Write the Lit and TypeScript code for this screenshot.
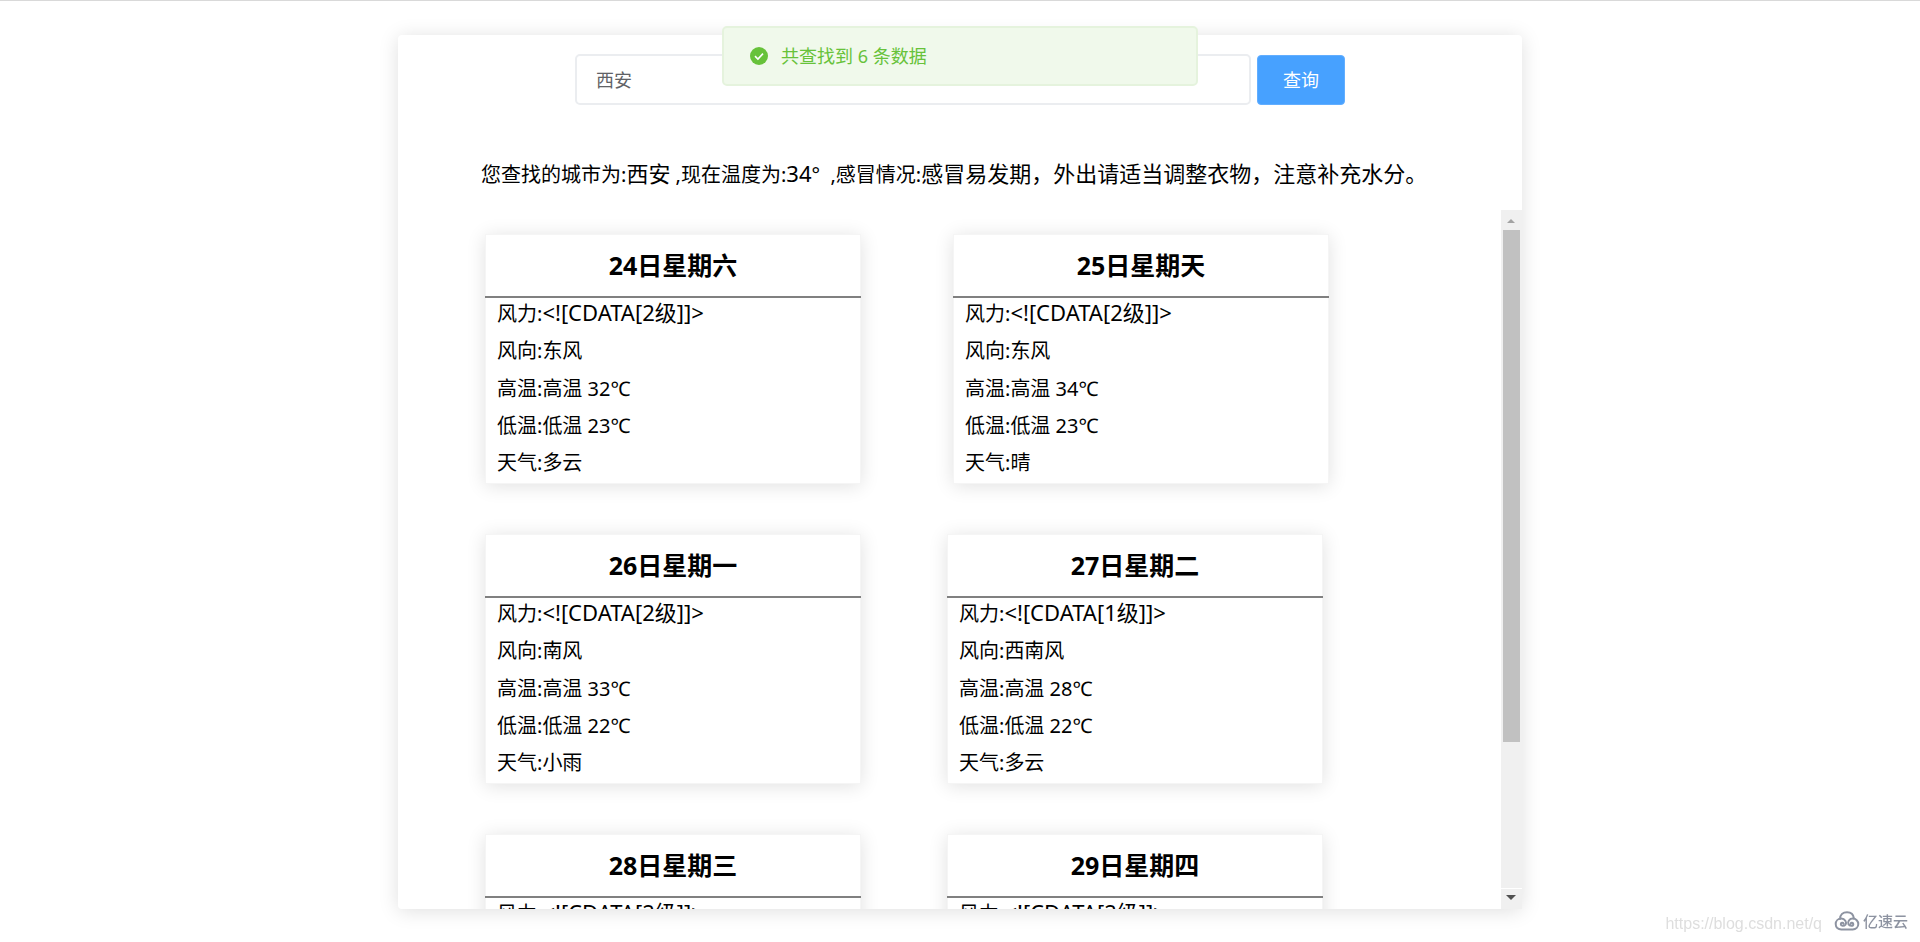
import { LitElement, html, css, svg } from "lit";
import { customElement, property, state } from "lit/decorators.js";
import { classMap } from "lit/directives/class-map.js";

interface Forecast {
  date: string;
  force: string;
  direction: string;
  high: string;
  low: string;
  type: string;
}

const FORECAST: Forecast[] = [
  { date: "24日星期六", force: "<![CDATA[2级]]>", direction: "东风", high: "高温 32℃", low: "低温 23℃", type: "多云" },
  { date: "25日星期天", force: "<![CDATA[2级]]>", direction: "东风", high: "高温 34℃", low: "低温 23℃", type: "晴" },
  { date: "26日星期一", force: "<![CDATA[2级]]>", direction: "南风", high: "高温 33℃", low: "低温 22℃", type: "小雨" },
  { date: "27日星期二", force: "<![CDATA[1级]]>", direction: "西南风", high: "高温 28℃", low: "低温 22℃", type: "多云" },
  { date: "28日星期三", force: "<![CDATA[2级]]>", direction: "东风", high: "高温 29℃", low: "低温 21℃", type: "多云" },
  { date: "29日星期四", force: "<![CDATA[2级]]>", direction: "东风", high: "高温 30℃", low: "低温 21℃", type: "多云" },
];

@customElement("weather-card")
class WeatherCard extends LitElement {
  @property({ attribute: false }) day!: Forecast;

  static styles = css`
    :host {
      display: flex;
      flex-direction: column;
      box-sizing: border-box;
      height: 250px;
      border: 1px solid #f5f5f5;
      background: #fff;
      box-shadow: 0 2px 18px rgba(0, 0, 0, 0.12);
    }
    .date {
      margin: 0 -1px;
      height: 61px;
      border-bottom: 2px solid #808080;
      font-size: 25px;
      font-weight: 700;
      line-height: 61px;
      text-align: center;
    }
    .facts {
      flex: 1;
      display: flex;
      flex-direction: column;
      justify-content: space-between;
      margin: 0;
      padding: 1px 11px 7px;
      list-style: none;
      font-size: 20px;
      line-height: 26px;
      white-space: nowrap;
    }
    .force {
      font-size: 22px;
    }
  `;

  render() {
    const d = this.day;
    return html`
      <h2 class="date">${d.date}</h2>
      <ul class="facts">
        <li>风力:<span class="force">${d.force}</span></li>
        <li>风向:${d.direction}</li>
        <li>高温:${d.high}</li>
        <li>低温:${d.low}</li>
        <li>天气:${d.type}</li>
      </ul>
    `;
  }
}

@customElement("app-root")
class AppRoot extends LitElement {
  @state() private city = "西安";

  static styles = css`
    :host {
      display: block;
      box-sizing: border-box;
      height: 100vh;
      padding: 34px 16px 33px;
      border-top: 1px solid #d9d9d9;
      overflow: hidden;
      background: #fff;
      color: #000;
      font-family: "Noto Sans", "Noto Sans CJK SC", sans-serif;
    }
    .panel {
      display: flex;
      flex-direction: column;
      box-sizing: border-box;
      max-width: 1124px;
      height: 100%;
      margin: 0 auto;
      border-radius: 4px;
      background: #fff;
      box-shadow: 0 2px 20px rgba(0, 0, 0, 0.13);
    }
    .search {
      display: flex;
      justify-content: center;
      gap: 6px;
      padding: 19px 16px 0;
    }
    .city {
      flex: 0 1 676px;
      min-width: 0;
      box-sizing: border-box;
      height: 51px;
      padding: 0 19px 2px;
      border: 2px solid #ebedf0;
      border-radius: 5px;
      outline: none;
      background: #fff;
      color: #606266;
      font: inherit;
      font-size: 18px;
    }
    .query {
      width: 88px;
      height: 50px;
      margin-top: 1px;
      padding: 0 0 2px;
      border: 1px solid #62aeff;
      border-radius: 4px;
      background: #47a1ff;
      color: #fff;
      font: inherit;
      font-size: 18px;
    }
    .summary {
      margin: 0;
      padding: 47px 16px 14px 83px;
      font-size: 20px;
      line-height: 43px;
      white-space: nowrap;
    }
    .strong {
      font-size: 22px;
    }
    .body {
      flex: 1;
      min-height: 0;
      display: flex;
    }
    .list {
      flex: 1;
      display: flex;
      flex-direction: column;
      gap: 50px;
      padding: 24px 16px 24px 87px;
      overflow-y: scroll;
      scrollbar-width: none;
    }
    .row {
      display: flex;
      gap: 86px;
    }
    .row.first {
      gap: 92px;
    }
    .card {
      flex: 0 1 376px;
    }
    .track {
      display: flex;
      flex-direction: column;
      width: 21px;
      background: #f0f0f0;
    }
    .thumb {
      flex: 0 0 73.2%;
      margin: 0 2px;
      background: #c1c1c1;
    }
    .arrow {
      height: 20px;
      width: 21px;
      flex: none;
    }
    .fill {
      flex: 1;
      border-bottom: 1px solid #fff;
    }
    .toast {
      position: fixed;
      top: 26px;
      left: 50%;
      transform: translateX(-50%);
      display: flex;
      align-items: center;
      gap: 13px;
      box-sizing: border-box;
      width: 476px;
      height: 60px;
      padding: 0 26px;
      border: 2px solid #e5f3dd;
      border-radius: 5px;
      background: #f0f9eb;
      color: #67c23a;
      font-size: 18px;
    }
    .message {
      padding-bottom: 2px;
    }
    .tick {
      width: 18px;
      height: 18px;
    }
    .marks {
      position: fixed;
      right: 12px;
      bottom: 6px;
      display: flex;
      align-items: flex-start;
      font: 16px/24px "Liberation Sans", sans-serif;
    }
    .source {
      padding-top: 3px;
      color: #dedede;
    }
    .cloud {
      width: 26px;
      height: 20px;
      margin: 2px 3px 0 12px;
    }
    .brand {
      color: #8d93a1;
      font: 500 15px/24px "Noto Sans CJK SC", sans-serif;
    }
  `;

  private onInput(e: Event) {
    this.city = (e.target as HTMLInputElement).value;
  }

  private arrow(points: string, color: string) {
    return html`<svg class="arrow" viewBox="0 0 21 20" aria-hidden="true">
      ${svg`<polygon points=${points} fill=${color}></polygon>`}
    </svg>`;
  }

  render() {
    const rows = [0, 2, 4].map((i) => FORECAST.slice(i, i + 2));
    return html`
      <main class="panel">
        <form class="search" @submit=${(e: Event) => e.preventDefault()}>
          <input class="city" type="text" aria-label="城市" .value=${this.city} @input=${this.onInput} />
          <button class="query" type="submit">查询</button>
        </form>
        <p class="summary">您查找的城市为:<span class="strong">西安</span> ,现在温度为:<span class="strong">34</span>°&nbsp; ,感冒情况:<span class="strong">感冒易发期，外出请适当调整衣物，注意补充水分。</span></p>
        <div class="body">
          <div class="list">
            ${rows.map(
              (row, i) => html`<div class=${classMap({ row: true, first: i === 0 })}>
                ${row.map((day) => html`<weather-card class="card" .day=${day}></weather-card>`)}
              </div>`
            )}
          </div>
          <div class="track" aria-hidden="true">
            ${this.arrow("6,13 14,13 10,9", "#a3a3a3")}
            <div class="thumb"></div>
            <div class="fill"></div>
            ${this.arrow("5,6 15,6 10,11", "#505050")}
          </div>
        </div>
      </main>
      <div class="toast" role="alert">
        <svg class="tick" viewBox="0 0 18 18" aria-hidden="true">
          <circle cx="9" cy="9" r="9" fill="#67c23a"></circle>
          <path d="M5 9.2 L7.9 12 L13 6.6" fill="none" stroke="#fff" stroke-width="1.6"></path>
        </svg>
        <span class="message">共查找到 6 条数据</span>
      </div>
      <div class="marks">
        <span class="source">https://blog.csdn.net/q</span>
        <svg class="cloud" viewBox="0 0 25 20" fill="none" stroke="#8d93a1" stroke-width="2" stroke-linecap="round" aria-hidden="true">
          <path d="M5.5 8 C5.5 3.5 8.5 1.2 12.5 1.2 C16.5 1.2 19 3.8 19.4 7.4"></path>
          <path d="M9 12.6 C8.6 11.4 6.2 11.6 6.3 13.2 C6.4 15.2 9.5 15.4 11 13.6 C12.6 11.2 10.4 7.6 6.8 7.6 C3.6 7.6 1.2 10 1.2 13 C1.2 16.2 3.6 18.4 6.8 18.4 H18.2 C21.4 18.4 23.8 16 23.8 13 C23.8 10 21.4 7.6 18.4 7.6 C14.8 7.6 12.8 10.8 14 13.2 C15.2 15.4 18.8 15.2 18.8 13.2 C18.8 11.6 16.6 11.4 16.2 12.6"></path>
        </svg>
        <span class="brand">亿速云</span>
      </div>
    `;
  }
}
